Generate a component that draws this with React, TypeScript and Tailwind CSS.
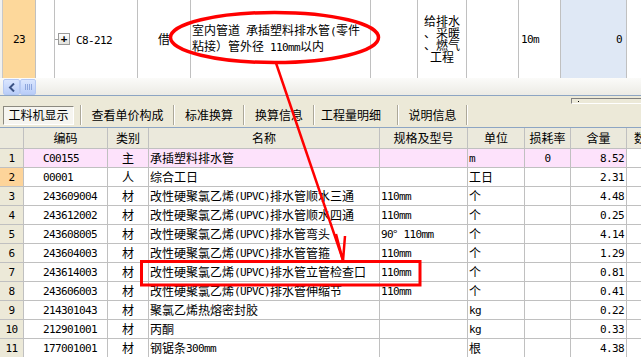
import React from "react";

// ascii runs get the half-width mono face, the rest stays CJK
function T({ s }: { s: string }) {
  const parts = s.split(/([\x20-\x7e]+)/).filter(Boolean);
  return (
    <>
      {parts.map((p, i) =>
        /^[\x20-\x7e]+$/.test(p) ? (
          <span key={i} className="font-['DejaVu_Sans_Mono',monospace] text-[11px] tracking-[-0.62px] whitespace-pre">
            {p}
          </span>
        ) : (
          <span key={i}>{p}</span>
        )
      )}
    </>
  );
}

const rows = [
  { no: "1", code: "C00155", cat: "主", name: "承插塑料排水管", spec: "", unit: "m", loss: "0", qty: "8.52", pink: true },
  { no: "2", code: "00001", cat: "人", name: "综合工日", spec: "", unit: "工日", loss: "", qty: "2.31", active: true },
  { no: "3", code: "243609004", cat: "材", name: "改性硬聚氯乙烯(UPVC)排水管顺水三通", spec: "110mm", unit: "个", loss: "", qty: "4.48" },
  { no: "4", code: "243612002", cat: "材", name: "改性硬聚氯乙烯(UPVC)排水管顺水四通", spec: "110mm", unit: "个", loss: "", qty: "0.25" },
  { no: "5", code: "243608005", cat: "材", name: "改性硬聚氯乙烯(UPVC)排水管弯头", spec: "90° 110mm", unit: "个", loss: "", qty: "4.14" },
  { no: "6", code: "243604003", cat: "材", name: "改性硬聚氯乙烯(UPVC)排水管管箍", spec: "110mm", unit: "个", loss: "", qty: "1.29" },
  { no: "7", code: "243614003", cat: "材", name: "改性硬聚氯乙烯(UPVC)排水管立管检查口", spec: "110mm", unit: "个", loss: "", qty: "0.81" },
  { no: "8", code: "243606003", cat: "材", name: "改性硬聚氯乙烯(UPVC)排水管伸缩节", spec: "110mm", unit: "个", loss: "", qty: "0.41" },
  { no: "9", code: "214301043", cat: "材", name: "聚氯乙烯热熔密封胶", spec: "", unit: "kg", loss: "", qty: "0.22" },
  { no: "10", code: "212901001", cat: "材", name: "丙酮", spec: "", unit: "kg", loss: "", qty: "0.33" },
  { no: "11", code: "177001001", cat: "材", name: "钢锯条300mm", spec: "", unit: "根", loss: "", qty: "4.38" },
];

const tabs = [
  { label: "查看单价构成", w: "w-[91px] justify-center" },
  { label: "标准换算", w: "w-[68px] justify-center" },
  { label: "换算信息", w: "w-[68px] justify-center" },
  { label: "工程量明细", w: "w-[82px] justify-start pl-[6px]" },
  { label: "说明信息", w: "w-[67px] justify-center" },
];

function Sep() {
  return <div className="shrink-0 w-[2px] h-[20px] border-l border-l-[#aca899] border-r border-r-white" />;
}

export default function App() {
  return (
    <div className="relative w-[641px] h-[357px] overflow-hidden bg-white text-black text-[12px] leading-none font-['Noto_Sans_CJK_SC','Noto_Sans',sans-serif]">
      {/* upper grid: quota row */}
      <div className="flex h-[78px]">
        <div className="shrink-0 w-[3px] bg-[#f1f1ef] border-r border-[#c8c8c8]" />
        <div className="shrink-0 w-[33px] bg-[#fdd89b] border-r border-[#c0c0c0] flex items-center justify-center">
          <T s="23" />
        </div>
        <div className="shrink-0 w-[19px] border-r border-[#c0c0c0]" />
        <div className="shrink-0 w-[83px] border-r border-[#c0c0c0] flex items-center">
          <div className="w-[3px] h-px bg-[#a0a0a0]" />
          <div className="w-[12px] h-[12px] border border-[#9a9a9a] bg-gradient-to-b from-white to-[#e2e2dc] flex items-center justify-center text-[11px] font-bold">
            <span className="font-['DejaVu_Sans_Mono',monospace] leading-none -mt-px">+</span>
          </div>
          <div className="ml-[6px]">
            <T s="C8-212" />
          </div>
        </div>
        <div className="shrink-0 w-[53px] border-r border-[#c0c0c0] flex items-center justify-center">借</div>
        <div className="shrink-0 w-[180px] border-r border-[#c0c0c0] flex items-center pl-[1px] leading-[14px]">
          <div>
            <T s="室内管道 承插塑料排水管(零件" />
            <br />
            <T s="粘接）管外径 110mm以内" />
          </div>
        </div>
        <div className="shrink-0 w-[47px] border-r border-[#c0c0c0]" />
        <div className="shrink-0 w-[49px] border-r border-[#c0c0c0] flex items-center justify-center text-center leading-[12px]">
          <div>
            给排水
            <br />
            、采暖
            <br />
            、燃气
            <br />
            工程
          </div>
        </div>
        <div className="shrink-0 w-[52px] border-r border-[#c0c0c0]" />
        <div className="shrink-0 w-[42px] border-r border-[#c0c0c0] flex items-center pl-[2px]">
          <T s="10m" />
        </div>
        <div className="shrink-0 w-[66px] border-r border-[#c0c0c0] bg-[#dfe8f5] flex items-center justify-end pr-[4px]">
          <T s="0" />
        </div>
        <div className="flex-1" />
      </div>

      {/* horizontal scrollbar */}
      <div className="h-[17px] flex items-start pl-[3px] bg-gradient-to-b from-[#fbfbf9] to-[#ecebe5]">
        <div className="mt-[1px] w-[17px] h-[16px] rounded-[2px] border border-[#b6c9f3] bg-gradient-to-b from-[#dbe6fe] to-[#b9cdf8] flex items-center justify-center">
          <svg width="8" height="9" viewBox="0 0 8 9">
            <path d="M6 0.5 L2 4.5 L6 8.5" fill="none" stroke="#3c5384" strokeWidth="2" />
          </svg>
        </div>
        <div className="mt-[1px] w-[16px] h-[16px] rounded-[2px] border border-[#b6c9f3] bg-gradient-to-b from-[#dbe6fe] to-[#b9cdf8] flex items-center justify-center gap-[1px]">
          <div className="w-px h-[6px] bg-[#8ea6dc]" />
          <div className="w-px h-[6px] bg-[#8ea6dc]" />
          <div className="w-px h-[6px] bg-[#8ea6dc]" />
          <div className="w-px h-[6px] bg-[#8ea6dc]" />
        </div>
      </div>
      <div className="h-[2px] border-t border-[#8da5c3] bg-[#ece9d8]" />

      {/* tab bar */}
      <div className="h-[30px] bg-[#ece9d8] flex flex-col">
        <div className="h-[8px] flex">
          <div className="ml-auto mt-[1px] w-[70px] h-[6px] border-t border-l border-[#808080] border-b border-b-white bg-[#ece9d8]">
            <div className="ml-[6px] mt-[2px] w-px h-px bg-black" />
          </div>
        </div>
        <div className="flex items-center pl-[3px]">
          <div className="shrink-0 w-[71px] h-[19px] border border-t-[#8c8a80] border-l-[#8c8a80] border-r-white border-b-white bg-[#f6f5f0] flex items-center justify-center">
            工料机显示
          </div>
          <div className="shrink-0 w-[6px]" />
          <Sep />
          {tabs.map((t) => (
            <React.Fragment key={t.label}>
              <div className={`shrink-0 h-[19px] flex items-center ${t.w}`}>{t.label}</div>
              <Sep />
            </React.Fragment>
          ))}
        </div>
      </div>

      {/* lower grid header */}
      <div className="flex h-[22px] border-t border-t-[#8da5c3] border-b border-b-[#c0c0c0] bg-[#ebe9dc]">
        <div className="shrink-0 w-[24px] border-r border-[#c0c0c0]" />
        <div className="shrink-0 w-[84px] border-r border-[#c0c0c0] flex items-center justify-center">编码</div>
        <div className="shrink-0 w-[41px] border-r border-[#c0c0c0] flex items-center justify-center">类别</div>
        <div className="shrink-0 w-[231px] border-r border-[#c0c0c0] flex items-center justify-center">名称</div>
        <div className="shrink-0 w-[88px] border-r border-[#c0c0c0] flex items-center justify-center">规格及型号</div>
        <div className="shrink-0 w-[57px] border-r border-[#c0c0c0] flex items-center justify-center">单位</div>
        <div className="shrink-0 w-[46px] border-r border-[#c0c0c0] flex items-center justify-center">损耗率</div>
        <div className="shrink-0 w-[56px] border-r border-[#c0c0c0] flex items-center justify-center">含量</div>
        <div className="flex-1 min-w-0 overflow-hidden flex items-center pl-[7px] whitespace-nowrap">数量</div>
      </div>

      {/* lower grid rows */}
      {rows.map((r) => (
        <div key={r.no} className="flex h-[19px] border-b border-[#c0c0c0]">
          <div
            className={`shrink-0 w-[24px] border-r border-[#c0c0c0] flex items-center justify-center ${
              r.active ? "bg-[#fdd49a]" : "bg-[#ece9d8]"
            }`}
          >
            <T s={r.no} />
          </div>
          <div className={`shrink-0 flex ${r.pink ? "bg-[#fde2fb]" : ""}`}>
            <div className="shrink-0 w-[84px] border-r border-[#c0c0c0] flex items-center pl-[19px]">
              <T s={r.code} />
            </div>
            <div className="shrink-0 w-[41px] border-r border-[#c0c0c0] flex items-center justify-center">{r.cat}</div>
            <div className="shrink-0 w-[231px] border-r border-[#c0c0c0] flex items-center pl-[1px] whitespace-nowrap">
              <T s={r.name} />
            </div>
            <div className="shrink-0 w-[88px] border-r border-[#c0c0c0] flex items-center pl-[1px] whitespace-nowrap">
              <T s={r.spec} />
            </div>
            <div className="shrink-0 w-[57px] border-r border-[#c0c0c0] flex items-center pl-[1px]">
              <T s={r.unit} />
            </div>
            <div className="shrink-0 w-[46px] border-r border-[#c0c0c0] flex items-center justify-center">
              <T s={r.loss} />
            </div>
            <div className="shrink-0 w-[56px] border-r border-[#c0c0c0] flex items-center justify-end pr-[2px]">
              <T s={r.qty} />
            </div>
          </div>
          <div className="flex-1 min-w-0" />
        </div>
      ))}

      {/* red hand-drawn annotation over the grid */}
      <svg className="absolute inset-0 pointer-events-none" width="641" height="357" viewBox="0 0 641 357">
        <ellipse cx="274.5" cy="37.5" rx="104" ry="25" fill="none" stroke="#ff0000" strokeWidth="3.5" />
        <line x1="276" y1="63" x2="343" y2="260" stroke="#ff0000" strokeWidth="2.5" />
        <polyline points="336,234 343,261 345,236" fill="none" stroke="#ff0000" strokeWidth="2.5" />
        <rect x="141.5" y="261.5" width="278.5" height="23.5" fill="none" stroke="#ff0000" strokeWidth="3" />
      </svg>
    </div>
  );
}
